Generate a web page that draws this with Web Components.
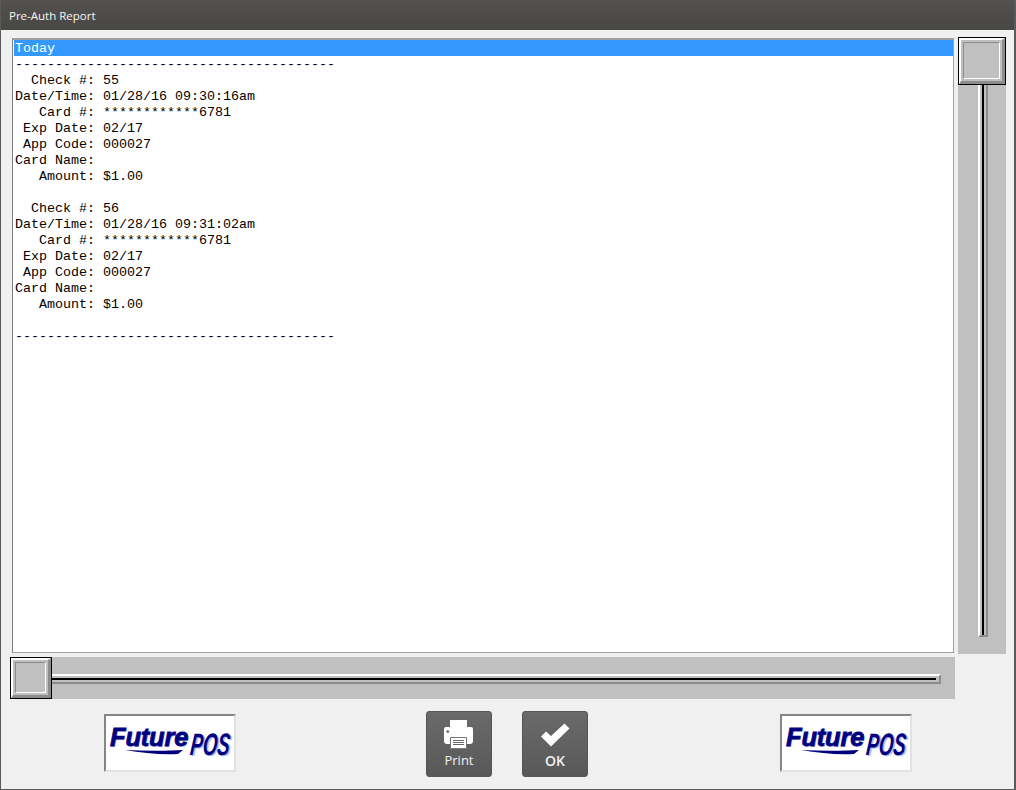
<!DOCTYPE html>
<html>
<head>
<meta charset="utf-8">
<title>Pre-Auth Report</title>
<style>
  html, body { margin: 0; padding: 0; background: #f0f0f0; }
</style>
</head>
<body>
<report-window>
  <span slot="title">Pre-Auth Report</span>
  <report-list slot="list"></report-list>
  <bevel-slider slot="vscroll" orientation="vertical"></bevel-slider>
  <bevel-slider slot="hscroll" orientation="horizontal"></bevel-slider>
  <future-logo slot="logo-left"></future-logo>
  <action-button slot="print" label="Print" icon="print"></action-button>
  <action-button slot="ok" label="OK" icon="check"></action-button>
  <future-logo slot="logo-right"></future-logo>
</report-window>

<script>
class ReportWindow extends HTMLElement {
  constructor() {
    super();
    this.shadowDOM = this.attachShadow({ mode: 'open' });
    this.shadowDOM.innerHTML = `
    <style>
    :host {
      display: flex;
      flex-direction: column;
      width: 1016px;
      height: 790px;
      box-sizing: border-box;
      background: #f0f0f0;
      border-left: 1px solid #5a5a5a;
      border-right: 2px solid #5a5a5a;
      border-bottom: 1px solid #5a5a5a;
      overflow: hidden;
    }
    .titlebar {
      height: 30px;
      margin: 0 -2px 0 -1px;
      padding-left: 9px;
      display: flex;
      align-items: center;
      background: linear-gradient(#535250, #494744);
      color: #f6f6f6;
      font: 11.5px "Open Sans", "Liberation Sans", sans-serif;
    }
    .main {
      display: grid;
      grid-template-columns: 945px 48px;
      grid-template-rows: 616px 42px;
      column-gap: 3px;
      row-gap: 3px;
      padding: 8px 0 0 9px;
    }
    .footer {
      display: flex;
      align-items: flex-start;
      padding: 12px 0 0 103px;
    }
    .logo { margin-top: 3px; display: block; }
    .gap-a { width: 190px; }
    .gap-b { width: 30px; }
    .gap-c { width: 192px; }
    </style>
    <div class="titlebar"><slot name="title"></slot></div>
    <div class="main">
      <slot name="list"></slot>
      <slot name="vscroll"></slot>
      <slot name="hscroll"></slot>
    </div>
    <div class="footer">
      <div class="logo"><slot name="logo-left"></slot></div>
      <div class="gap-a"></div>
      <slot name="print"></slot>
      <div class="gap-b"></div>
      <slot name="ok"></slot>
      <div class="gap-c"></div>
      <div class="logo"><slot name="logo-right"></slot></div>
    </div>
    `;
  }
}

const REPORT_LINES = [
  '----------------------------------------',
  '  Check #: 55',
  'Date/Time: 01/28/16 09:30:16am',
  '   Card #: ************6781',
  ' Exp Date: 02/17',
  ' App Code: 000027',
  'Card Name:',
  '   Amount: $1.00',
  '',
  '  Check #: 56',
  'Date/Time: 01/28/16 09:31:02am',
  '   Card #: ************6781',
  ' Exp Date: 02/17',
  ' App Code: 000027',
  'Card Name:',
  '   Amount: $1.00',
  '',
  '----------------------------------------',
];

class ReportList extends HTMLElement {
  constructor() {
    super();
    this.shadowDOM = this.attachShadow({ mode: 'open' });
    const rows = REPORT_LINES.map((line) => `<div class="row">${line || '&nbsp;'}</div>`).join('');
    this.shadowDOM.innerHTML = `
    <style>
    :host {
      display: block;
      box-sizing: border-box;
      height: 615px;
      margin-left: 2px;
      margin-right: 1px;
      background: #fff;
      border-style: solid;
      border-width: 2px 1px 1px 1px;
      border-color: #a0a0a0 #a0a0a0 #a0a0a0 #808080;
      overflow: hidden;
      font: 13.33px/18px "Liberation Mono", monospace;
      color: #000;
    }
    .row { height: 16px; padding-left: 2px; white-space: pre; }
    .selected { background: #3399ff; color: #fff; margin-left: 1px; padding-left: 1px; }
    </style>
    <div class="row selected">Today</div>
    ${rows}
    `;
  }
}

class BevelSlider extends HTMLElement {
  constructor() {
    super();
    this.shadowDOM = this.attachShadow({ mode: 'open' });
    this.shadowDOM.innerHTML = `
    <style>
    :host {
      display: flex;
      background: #c0c0c0;
      box-sizing: border-box;
    }
    :host([orientation="vertical"]) { flex-direction: column; height: 616px; width: 48px; }
    :host([orientation="horizontal"]) { flex-direction: row; height: 42px; width: 945px; }
    .thumb {
      flex: none;
      box-sizing: border-box;
      border: 1px solid #000;
      background: #c0c0c0;
    }
    :host([orientation="vertical"]) .thumb { width: 48px; height: 48px; margin-top: -1px; }
    :host([orientation="horizontal"]) .thumb { width: 42px; height: 42px; }
    .thumb-outer {
      box-sizing: border-box;
      height: 100%;
      border-style: solid;
      border-width: 2px 3px 3px 2px;
      border-color: #fff #8c8c8c #8c8c8c #fff;
      padding: 2px;
    }
    .thumb-inner {
      box-sizing: border-box;
      height: 100%;
      border: 1px solid;
      border-color: #8c8c8c #fff #fff #8c8c8c;
    }
    .groove {
      box-sizing: border-box;
      display: flex;
      border-style: solid;
      border-color: #fff #8c8c8c #8c8c8c #fff;
    }
    :host([orientation="vertical"]) .groove {
      width: 10px;
      height: 552px;
      margin-left: 20px;
      border-width: 0 2px 2px 2px;
      justify-content: center;
    }
    :host([orientation="horizontal"]) .groove {
      height: 10px;
      width: 889px;
      margin-top: 17px;
      border-width: 2px 2px 2px 0;
      padding-right: 3px;
      align-items: center;
    }
    .line { background: #000; }
    :host([orientation="vertical"]) .line { width: 2px; height: 100%; }
    :host([orientation="horizontal"]) .line { height: 2px; width: 100%; }
    </style>
    <div class="thumb"><div class="thumb-outer"><div class="thumb-inner"></div></div></div>
    <div class="groove"><div class="line"></div></div>
    `;
  }
}

class FutureLogo extends HTMLElement {
  constructor() {
    super();
    this.shadowDOM = this.attachShadow({ mode: 'open' });
    this.shadowDOM.innerHTML = `
    <style>
    :host {
      display: flex;
      box-sizing: border-box;
      width: 132px;
      height: 58px;
      background: #fff;
      border: 2px solid;
      border-color: #868686 #e2e2e2 #e2e2e2 #868686;
      padding: 0 0 0 4px;
      overflow: hidden;
      color: #00007f;
    }
    .left { width: 78px; flex: none; }
    .future {
      display: block;
      height: 24px;
      margin-top: 9px;
      font: italic bold 25.5px/24px "Liberation Sans", sans-serif;
      letter-spacing: -0.2px;
      -webkit-text-stroke: 0.8px #00007f;
      text-shadow: 1px 1px 1px #b8c4ee;
    }
    svg { display: block; margin: 1px 0 0 15px; }
    .pos {
      display: block;
      flex: none;
      width: 42px;
      margin: 15px 0 0 0;
      font: italic bold 31px/27px "Liberation Sans", sans-serif;
      white-space: nowrap;
      transform-origin: 0 100%;
      transform: scaleX(0.6) skewX(-10deg);
      text-shadow: 3px 1px 1px #a8b8e4;
    }
    </style>
    <div class="left">
      <span class="future">Future</span>
      <svg width="60" height="6" viewBox="0 0 60 6"><path d="M0 0 C20 1 42 1 58 0 L53 4 C36 5 18 3 0 0Z" fill="#00007f"/></svg>
    </div>
    <span class="pos">POS</span>
    `;
  }
}

const ICONS = {
  print: `<svg width="32" height="32" viewBox="0 0 32 32">
    <path d="M7 1h17v7H7z" fill="#fff"/>
    <path d="M3 8h25a2 2 0 0 1 2 2v12a3 3 0 0 1-3 3H4a3 3 0 0 1-3-3V10a2 2 0 0 1 2-2z" fill="#fff"/>
    <circle cx="4.800" cy="12.600" r="1.400" fill="#666"/>
    <path d="M7.500 18.500h16v11h-16z" fill="#fff" stroke="#777" stroke-width="1"/>
    <path d="M10 21.500h11M10 23.500h11M10 25.500h11" stroke="#666" stroke-width="1"/>
  </svg>`,
  check: `<svg width="32" height="26" viewBox="0 0 32 26">
    <path d="M2 13.500L7 8.500L12 13L25.500 0.500L30.500 5.500L12 23.500Z" fill="#fff"/>
  </svg>`,
};

class ActionButton extends HTMLElement {
  constructor() {
    super();
    this.shadowDOM = this.attachShadow({ mode: 'open' });
    const icon = this.getAttribute('icon');
    this.shadowDOM.innerHTML = `
    <style>
    :host {
      display: flex;
      flex-direction: column;
      align-items: center;
      box-sizing: border-box;
      width: 66px;
      height: 66px;
      background: linear-gradient(#6a6a6a, #585858);
      border: 1px solid #555;
      border-radius: 3px;
      color: #f2f2f2;
      font: 13px/16px "Open Sans", "Liberation Sans", sans-serif;
    }
    .icon { height: 37px; display: flex; align-items: flex-end; justify-content: center; }
    :host([icon="print"]) .icon { height: 39px; }
    :host([icon="check"]) .label { font-weight: 600; font-size: 14px; }
    svg { display: block; }
    .label { margin-top: 4px; }
    :host([icon="print"]) .label { margin-top: 1px; }
    </style>
    <div class="icon">${ICONS[icon]}</div>
    <div class="label">${this.getAttribute('label')}</div>
    `;
  }
}

customElements.define('report-window', ReportWindow);
customElements.define('report-list', ReportList);
customElements.define('bevel-slider', BevelSlider);
customElements.define('future-logo', FutureLogo);
customElements.define('action-button', ActionButton);
</script>
</body>
</html>
